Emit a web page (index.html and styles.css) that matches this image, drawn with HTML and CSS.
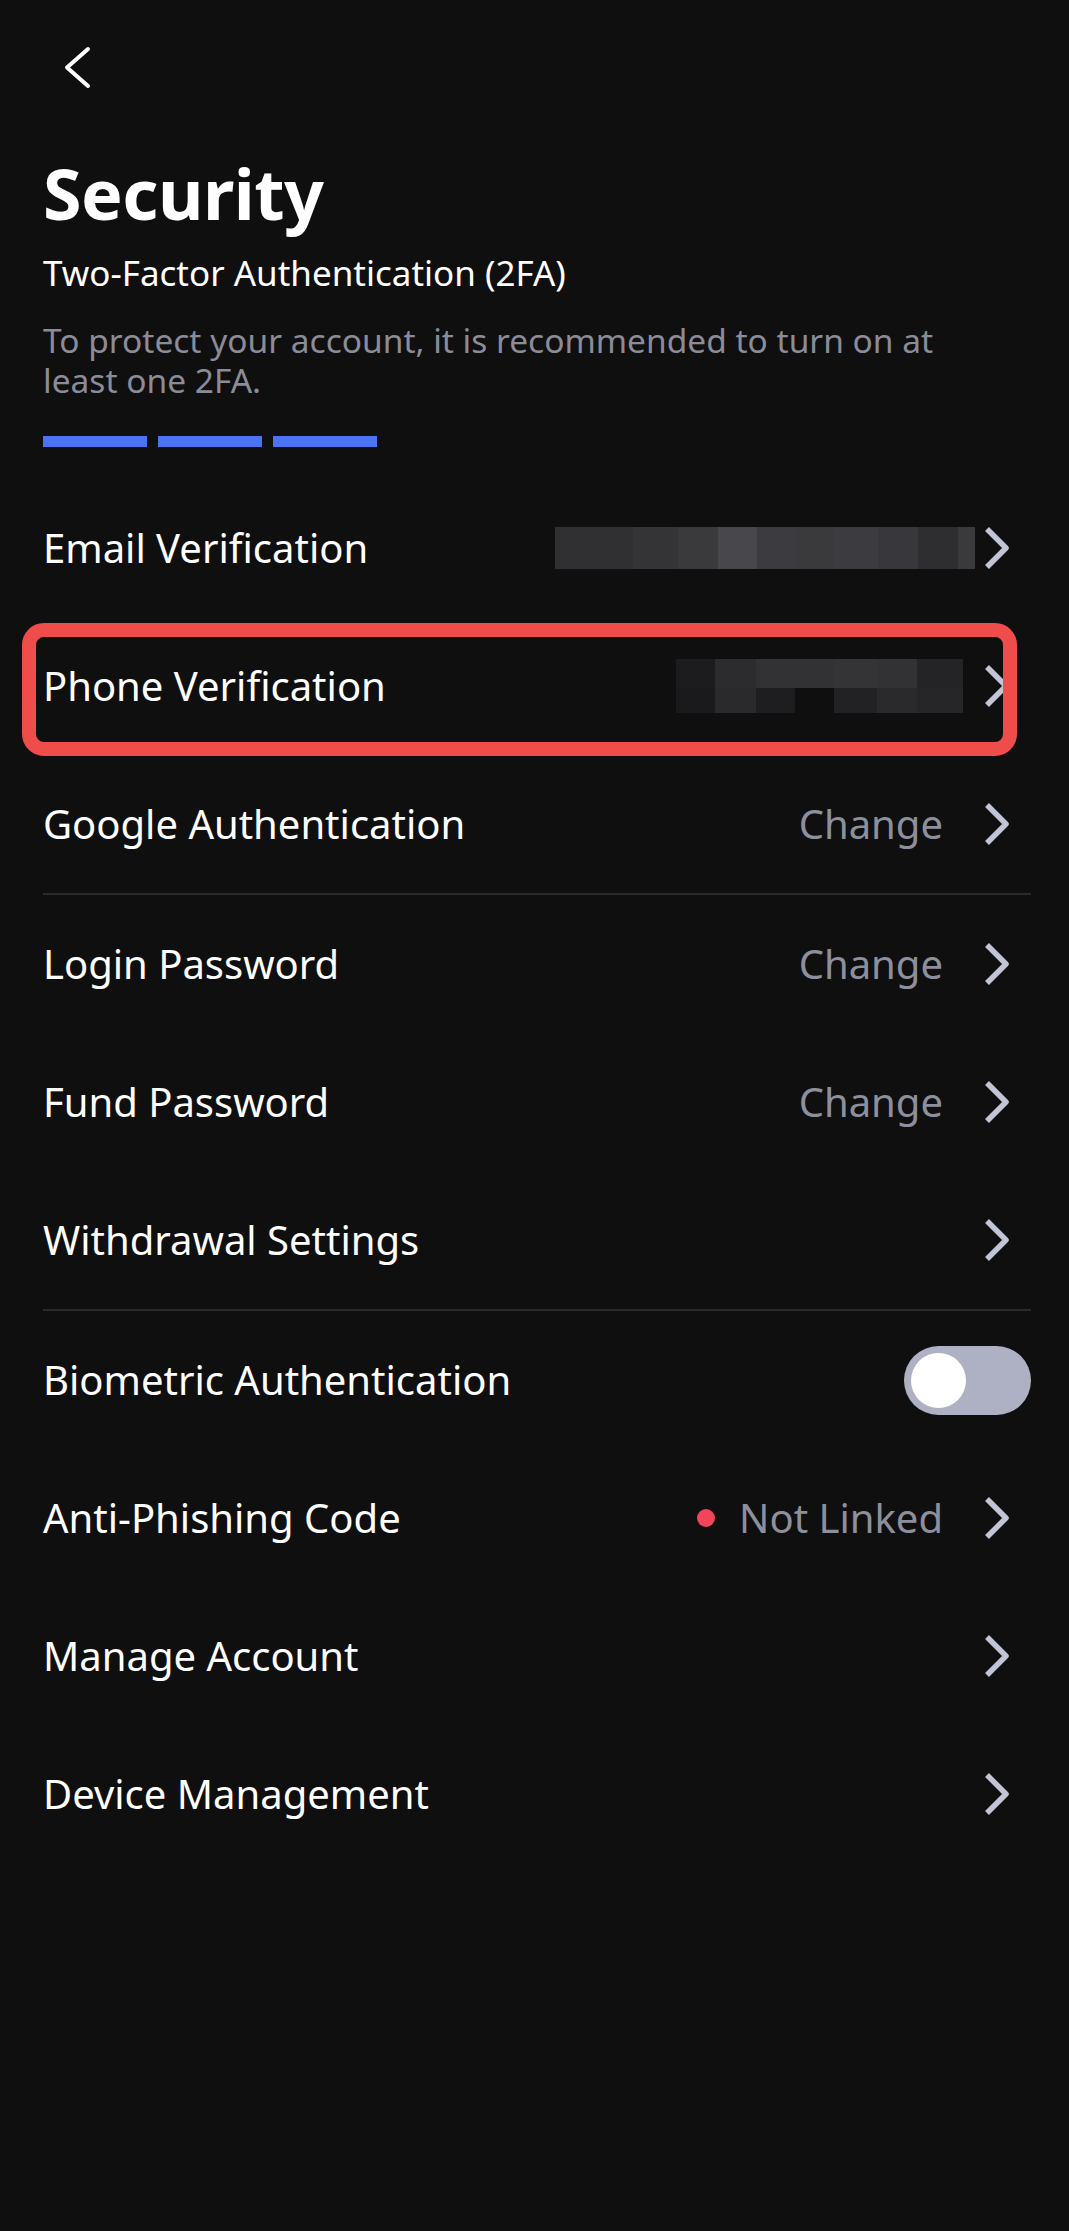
FILE: index.html
```html
<!DOCTYPE html>
<html lang="en">
<head>
    <meta charset="UTF-8">
    <meta name="viewport" content="width=device-width, initial-scale=1.0">
    <title>Security</title>
    <link rel="stylesheet" href="styles.css">
</head>
<body>

    <div class="page">

        <div class="topbar">
            <svg class="back-icon" width="32" height="45" viewBox="0 0 32 45">
                <polyline points="26,4 5,22.5 26,41" fill="none" stroke="#ffffff" stroke-width="4" stroke-linecap="round" stroke-linejoin="round"/>
            </svg>
        </div>

        <div class="header">
            <h1>Security</h1>
            <h2>Two-Factor Authentication (2FA)</h2>
            <p>To protect your account, it is recommended to turn on at least one 2FA.</p>
            <div class="progress">
                <span></span>
                <span></span>
                <span></span>
            </div>
        </div>

        <div class="list">
            <div class="row">
                <span class="label">Email Verification</span>
                <div class="right">
                    <div class="mosaic mosaic-email">
                        <i class="c1"></i><i class="c2"></i><i class="c3"></i><i class="c4"></i><i class="c5"></i>
                        <i class="c3"></i><i class="c5"></i><i class="c6"></i><i class="c7"></i><i class="c3"></i>
                    </div>
                    <svg class="chevron" width="28" height="46" viewBox="0 0 28 46"><polyline points="4,4 23,23 4,42"/></svg>
                </div>
            </div>

            <div class="row">
                <span class="label">Phone Verification</span>
                <div class="right">
                    <div class="mosaic mosaic-phone">
                        <i class="d1"></i><i class="d2"></i><i class="d3"></i><i class="d3"></i><i class="d4"></i><i class="d3"></i><i class="d5"></i>
                        <i class="d6"></i><i class="d7"></i><i class="d8"></i><i class="d9"></i><i class="d10"></i><i class="d7"></i><i class="d11"></i>
                    </div>
                    <svg class="chevron" width="28" height="46" viewBox="0 0 28 46"><polyline points="4,4 23,23 4,42"/></svg>
                </div>
                <div class="highlight"></div>
            </div>

            <div class="row">
                <span class="label">Google Authentication</span>
                <div class="right">
                    <span class="value">Change</span>
                    <svg class="chevron" width="28" height="46" viewBox="0 0 28 46"><polyline points="4,4 23,23 4,42"/></svg>
                </div>
            </div>

            <div class="divider"></div>

            <div class="row">
                <span class="label">Login Password</span>
                <div class="right">
                    <span class="value">Change</span>
                    <svg class="chevron" width="28" height="46" viewBox="0 0 28 46"><polyline points="4,4 23,23 4,42"/></svg>
                </div>
            </div>

            <div class="row">
                <span class="label">Fund Password</span>
                <div class="right">
                    <span class="value">Change</span>
                    <svg class="chevron" width="28" height="46" viewBox="0 0 28 46"><polyline points="4,4 23,23 4,42"/></svg>
                </div>
            </div>

            <div class="row">
                <span class="label">Withdrawal Settings</span>
                <div class="right">
                    <svg class="chevron" width="28" height="46" viewBox="0 0 28 46"><polyline points="4,4 23,23 4,42"/></svg>
                </div>
            </div>

            <div class="divider"></div>

            <div class="row">
                <span class="label">Biometric Authentication</span>
                <div class="right">
                    <div class="toggle"><span class="knob"></span></div>
                </div>
            </div>

            <div class="row">
                <span class="label">Anti-Phishing Code</span>
                <div class="right">
                    <span class="dot"></span>
                    <span class="value">Not Linked</span>
                    <svg class="chevron" width="28" height="46" viewBox="0 0 28 46"><polyline points="4,4 23,23 4,42"/></svg>
                </div>
            </div>

            <div class="row">
                <span class="label">Manage Account</span>
                <div class="right">
                    <svg class="chevron" width="28" height="46" viewBox="0 0 28 46"><polyline points="4,4 23,23 4,42"/></svg>
                </div>
            </div>

            <div class="row">
                <span class="label">Device Management</span>
                <div class="right">
                    <svg class="chevron" width="28" height="46" viewBox="0 0 28 46"><polyline points="4,4 23,23 4,42"/></svg>
                </div>
            </div>
        </div>

    </div>

</body>
</html>
```

FILE: styles.css
```css
* {
    margin: 0;
    padding: 0;
    box-sizing: border-box;
}

body {
    font-family: 'Noto Sans', 'Open Sans', sans-serif;
    background-color: #0f0f10;
    color: #ffffff;
    min-height: 100vh;
}

.page {
    padding: 0 38px 0 43px;
}

/* top bar with the back arrow */
.topbar {
    height: 90px;
    padding-top: 45px;
}

.back-icon {
    display: block;
    margin-left: 19px;
}

.header h1 {
    margin-top: 63px;
    font-size: 70px;
    line-height: 80px;
    font-weight: 700;
    letter-spacing: -0.5px;
}

.header h2 {
    margin-top: 18px;
    font-size: 35px;
    line-height: 44px;
    font-weight: 400;
}

.header p {
    margin-top: 25px;
    font-size: 33.5px;
    line-height: 40px;
    color: #8b8c97;
    max-width: 930px;
}

.progress {
    display: flex;
    gap: 11px;
    margin-top: 36px;
}

.progress span {
    width: 104px;
    height: 11px;
    background-color: #4b74f2;
}

.list {
    margin-top: 32px;
}

.row {
    position: relative;
    display: flex;
    align-items: center;
    justify-content: space-between;
    height: 138px;
}

.label {
    font-size: 40px;
    line-height: 56px;
    color: #ffffff;
}

.right {
    display: flex;
    align-items: center;
}

.value {
    font-size: 40px;
    line-height: 56px;
    color: #8e8f9c;
    margin-right: 40px;
}

.chevron {
    display: block;
    margin-right: 20px;
}

.chevron polyline {
    fill: none;
    stroke: #c2c5d6;
    stroke-width: 5.5;
    stroke-linejoin: round;
}

.divider {
    height: 2px;
    background-color: #2a2a2d;
}

/* blurred-out account values */
.mosaic {
    display: grid;
    margin-right: 8px;
}

.mosaic i {
    display: block;
}

.mosaic-email {
    grid-template-columns: 78px 45px 40px 39px 39px 38px 44px 40px 40px 17px;
    grid-template-rows: 42px;
}

.mosaic-phone {
    grid-template-columns: 39px 41px 39px 39px 43px 40px 46px;
    grid-template-rows: 29px 25px;
    margin-right: 20px;
}

.c1 { background-color: #303033; }
.c2 { background-color: #343437; }
.c3 { background-color: #3a3a3d; }
.c4 { background-color: #48474c; }
.c5 { background-color: #3c3c40; }
.c6 { background-color: #38383c; }
.c7 { background-color: #2e2e31; }

.d1 { background-color: #1c1c1e; }
.d2 { background-color: #2c2c2f; }
.d3 { background-color: #323235; }
.d4 { background-color: #343437; }
.d5 { background-color: #242426; }
.d6 { background-color: #1a1a1c; }
.d7 { background-color: #2a2a2d; }
.d8 { background-color: #1e1e20; }
.d9 { background-color: #0f0f10; }
.d10 { background-color: #222224; }
.d11 { background-color: #262628; }

/* red annotation frame around the phone row */
.highlight {
    position: absolute;
    left: -21px;
    right: 14px;
    top: 6px;
    bottom: -1px;
    border: 14px solid #ef4c4c;
    border-radius: 22px;
    pointer-events: none;
}

.toggle {
    width: 127px;
    height: 69px;
    border-radius: 35px;
    background-color: #adb1c3;
    padding: 7px;
}

.knob {
    display: block;
    width: 55px;
    height: 55px;
    border-radius: 50%;
    background-color: #ffffff;
}

.dot {
    width: 18px;
    height: 18px;
    border-radius: 50%;
    background-color: #f2445a;
    margin-right: 24px;
}
```
